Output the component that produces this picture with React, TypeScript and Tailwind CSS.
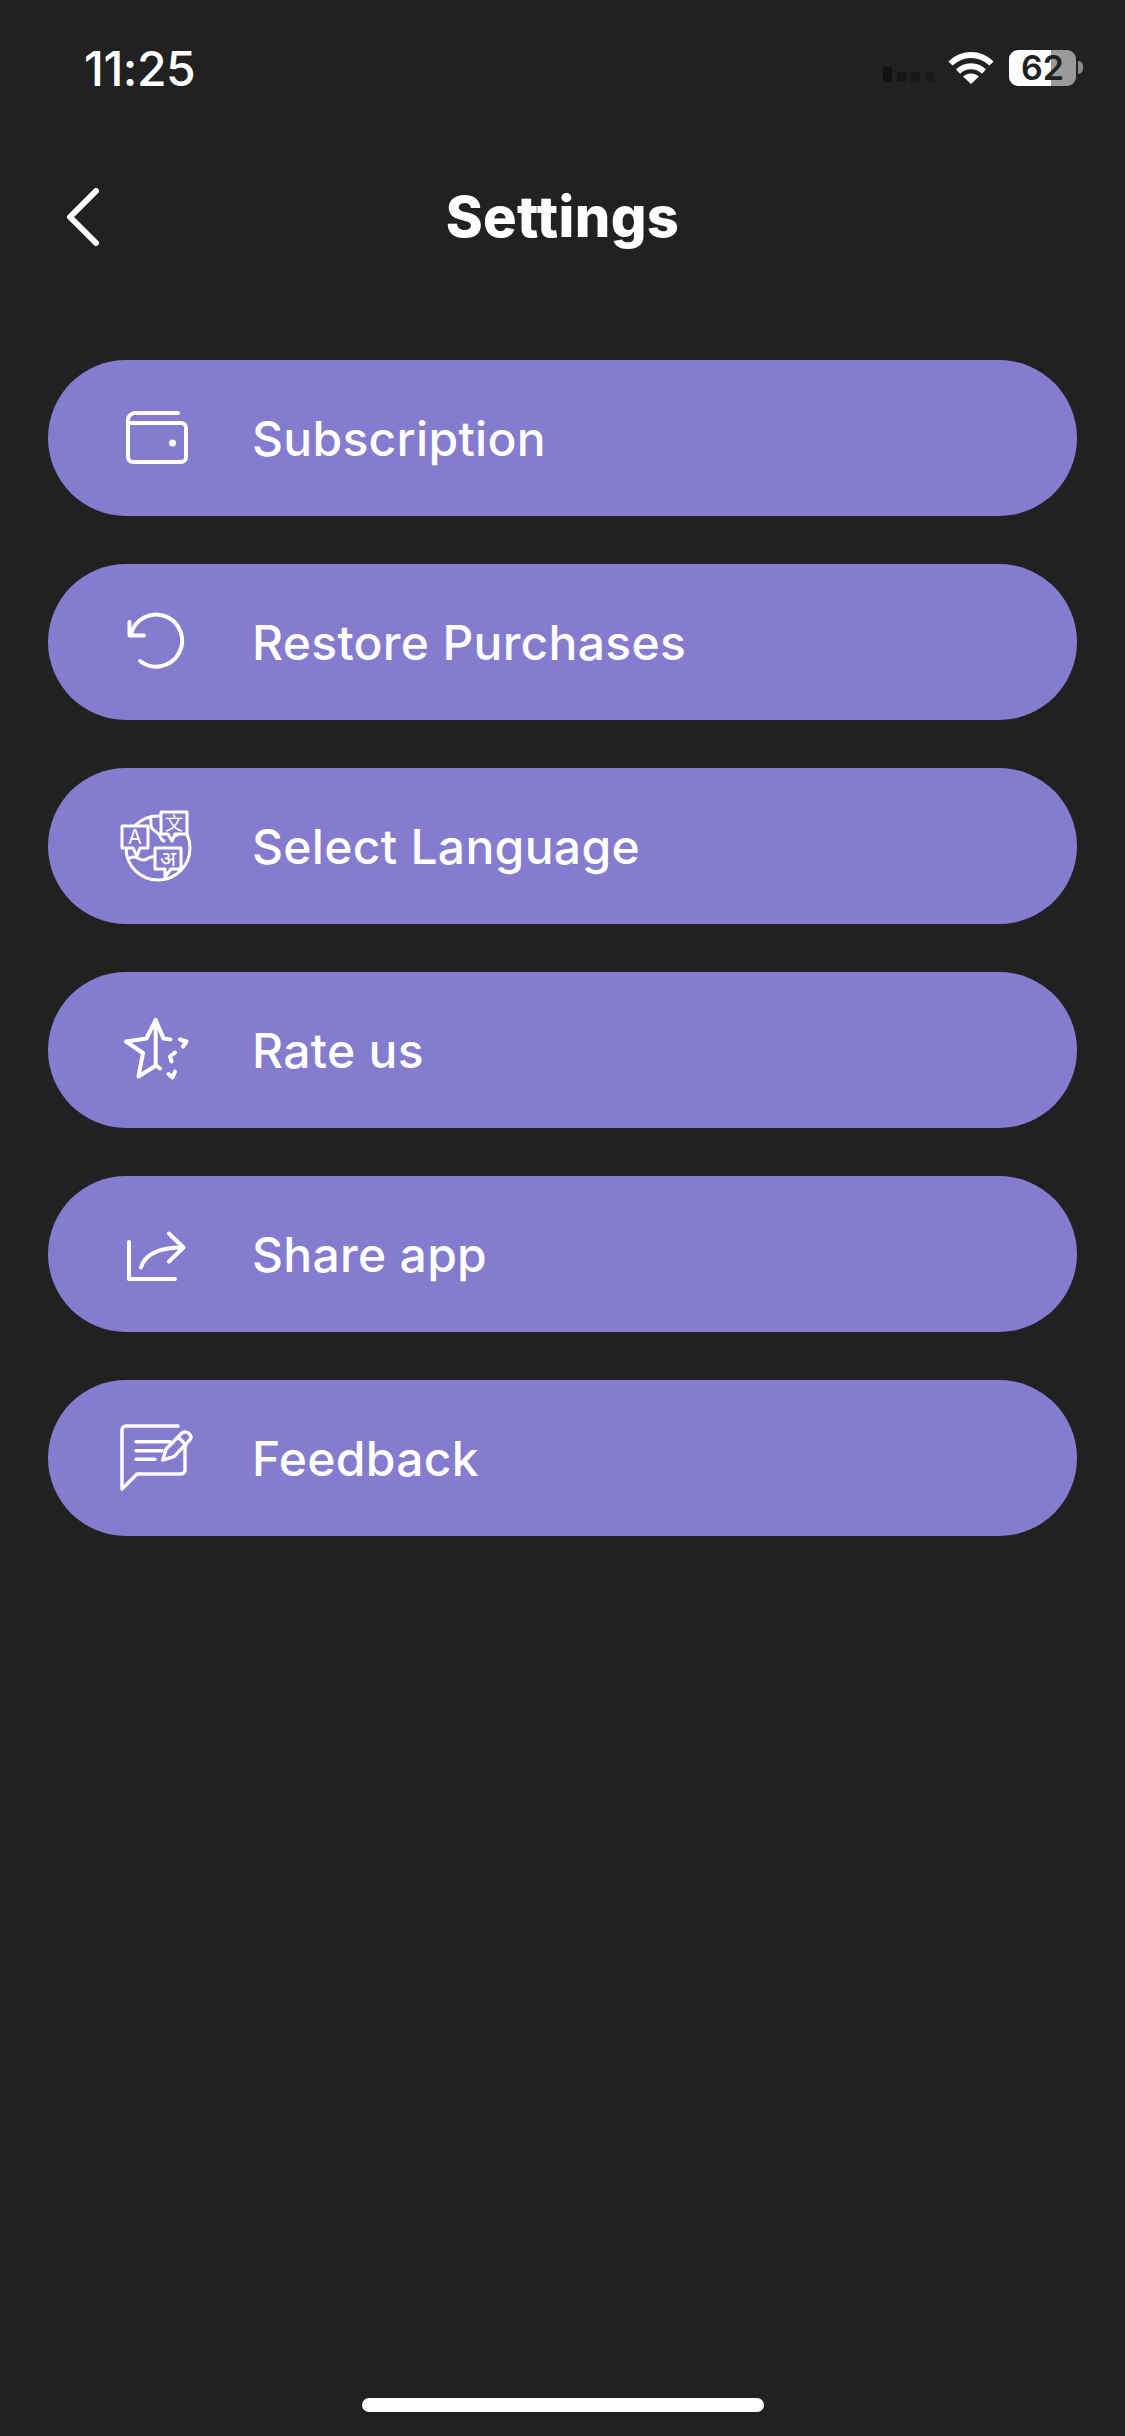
import React from 'react';

const iconProps = {
  width: 110,
  height: 110,
  viewBox: '0 0 110 110',
  fill: 'none',
  stroke: 'white',
  strokeWidth: 4,
  strokeLinecap: 'round' as const,
  strokeLinejoin: 'round' as const,
};

const WalletIcon = () => (
  <svg {...iconProps}>
    <path d="M78 30H35a7 7 0 0 0-7 7v37a5 5 0 0 0 5 5h48a5 5 0 0 0 5-5V45a5 5 0 0 0-5-5H28" />
    <circle cx="72.5" cy="60" r="3.5" fill="white" stroke="none" />
  </svg>
);

const RestoreIcon = () => (
  <svg {...iconProps}>
    <path d="M40 74A26 26 0 1 0 31 47" />
    <path d="M29.5 35V48.5H44" />
  </svg>
);

const LanguageIcon = () => (
  <svg {...iconProps} strokeWidth={3}>
    <circle cx="58" cy="57" r="32" />
    <path d="M30 67c6-4 9 3 14 2s5-4 10-3" />
    <path d="M50 26c3 6-2 10 5 14s4 8 9 10" />
    <path d="M70 45c5 2 8-2 14-6" />
    <path d="M22 35h26v22H40l-3 8-4-8H22z" fill="#857bcf" />
    <path d="M61 21h26v22H75l-3 7-4-7h-7z" fill="#857bcf" />
    <path d="M55 57h26v21H71l-6 8v-8H55z" fill="#857bcf" />
    <text x="35" y="53" textAnchor="middle" fontSize="20" fontFamily="Inter, sans-serif" fill="white" stroke="none">A</text>
    <text x="74" y="39" textAnchor="middle" fontSize="18" fontFamily="'Noto Sans CJK SC', sans-serif" fill="white" stroke="none">文</text>
    <text x="68" y="75" textAnchor="middle" fontSize="21" fontFamily="'Noto Sans', sans-serif" fill="white" stroke="none">अ</text>
  </svg>
);

const StarIcon = () => (
  <svg {...iconProps}>
    <path d="M60 73.5L56 70.5L38.5 81.5L43 58L26 46.5L46.5 43.5L55.7 25L63.5 43.5L70.5 44.5" />
    <path d="M55.7 25V70.5" />
    <path d="M80 44.5L86.5 46.5L83 51.5" />
    <path d="M75 57.5L70 61.5L71.5 66.5" />
    <path d="M68.5 79L72.5 82.5L75 76.5" />
  </svg>
);

const ShareIcon = () => (
  <svg {...iconProps}>
    <path d="M29 43V80H75" />
    <path d="M41 68.5C45 55 58 48.5 83 48.5" />
    <path d="M69 34.5L83.5 48.5L69 62.5" />
  </svg>
);

const FeedbackIcon = () => (
  <svg {...iconProps} strokeWidth={3.4}>
    <path d="M78 23H26a4 4 0 0 0-4 4v59l15-15h44a4 4 0 0 0 4-4V42" />
    <path d="M36 38.7H70M36 47.7H62M36 56.3H55" />
    <path d="M62.7 57L66 46.3L81.7 30.3C84 28 88 29 90 31.5C91.5 33.5 91 35.5 90 36.7L74 53.7Z" />
    <path d="M78.3 34.3L86 42" />
  </svg>
);

const rows = [
  { label: 'Subscription', icon: <WalletIcon /> },
  { label: 'Restore Purchases', icon: <RestoreIcon /> },
  { label: 'Select Language', icon: <LanguageIcon /> },
  { label: 'Rate us', icon: <StarIcon /> },
  { label: 'Share app', icon: <ShareIcon /> },
  { label: 'Feedback', icon: <FeedbackIcon /> },
];

const StatusBar = () => (
  <div className="flex h-[90px] items-start justify-between pl-[84px] pr-[49px] pt-[42px]">
    <span className="text-[48px] leading-[54px] font-medium tracking-[-0.5px] text-white">11:25</span>
    <div className="flex items-center pt-[8px]">
      <div className="mt-[12px] mr-[14px] flex items-end gap-[5px] opacity-70">
        <div className="h-[15px] w-[9px] rounded-[2px] bg-[#0d0d0d]" />
        <div className="h-[10px] w-[9px] rounded-[2px] bg-[#111111]" />
        <div className="h-[10px] w-[9px] rounded-[2px] bg-[#151515]" />
        <div className="h-[10px] w-[9px] rounded-[2px] bg-[#181818]" />
      </div>
      <svg width="46" height="34" viewBox="0 0 46 34" fill="none" stroke="white" strokeWidth="6">
        <path d="M2.5 12.5C14 1 32 1 43.5 12.5" />
        <path d="M10 20.5C17.5 13.5 28.5 13.5 36 20.5" />
        <path d="M23 33L15 25.5C19.5 21.5 26.5 21.5 31 25.5Z" fill="white" stroke="none" />
      </svg>
      <div className="relative ml-[15px] flex h-[36px] w-[67px] items-center justify-center rounded-[9px] bg-[linear-gradient(90deg,#ffffff_63%,#9a9a9a_63%)]">
        <span className="text-[34px] leading-none font-semibold text-[#212121]">62</span>
        <div className="absolute top-[11px] right-[-7px] h-[13px] w-[5px] rounded-r-full bg-[#8a8a8a]" />
      </div>
    </div>
  </div>
);

export default function App() {
  return (
    <div className="flex h-[2436px] w-[1125px] flex-col bg-[#212121] font-['Inter',sans-serif]">
      <StatusBar />

      {/* Header */}
      <div className="relative mt-[88px] flex h-[78px] items-center justify-center">
        <button className="absolute top-[9px] left-[62px]" aria-label="Back">
          <svg width="42" height="60" viewBox="0 0 42 60" fill="none" stroke="white" strokeWidth="6" strokeLinecap="round" strokeLinejoin="round">
            <path d="M34 4L8 30L34 56" />
          </svg>
        </button>
        <h1 className="text-[56px] leading-none font-extrabold tracking-[0.4px] text-white">Settings</h1>
      </div>

      {/* Menu */}
      <div className="mt-[104px] flex flex-col gap-[48px] px-[48px]">
        {rows.map((row) => (
          <div key={row.label} className="flex h-[156px] items-center rounded-full bg-[#857bcf] pl-[52px]">
            {row.icon}
            <span className="ml-[42px] pt-[1px] text-[48px] leading-none font-medium tracking-[0.3px] text-white">{row.label}</span>
          </div>
        ))}
      </div>

      {/* Home indicator */}
      <div className="mt-auto mb-[24px] h-[14px] w-[402px] self-center rounded-full bg-white" />
    </div>
  );
}
